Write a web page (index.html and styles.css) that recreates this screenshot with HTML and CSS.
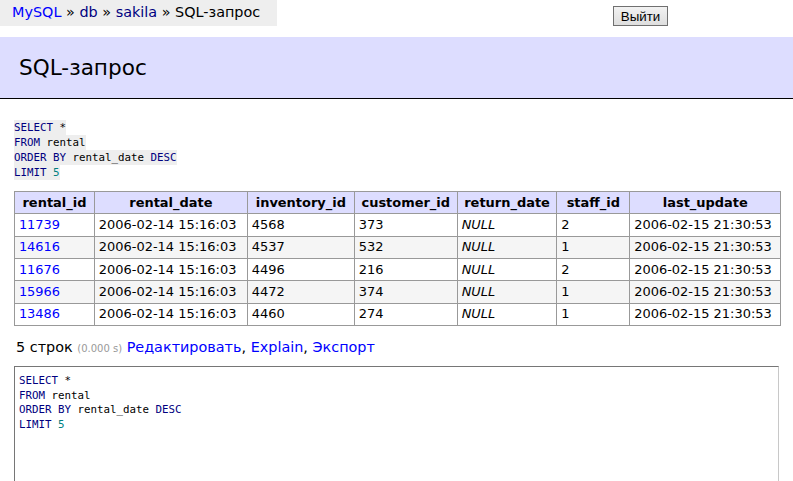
FILE: index.html
```html
<!DOCTYPE html>
<html lang="ru">
<head>
<meta charset="utf-8">
<title>SQL-запрос</title>
<link rel="stylesheet" href="styles.css">
</head>
<body>
<div class="topbar">
  <p class="breadcrumb"><a href="#" class="link-new">MySQL</a> » <a href="#">db</a> » <a href="#">sakila</a> » SQL-запрос</p>
  <button class="logout" type="button">Выйти</button>
</div>
<h2 class="title">SQL-запрос</h2>
<div class="content">
  <p class="query sql"><code class="code-bg"><a href="#" class="kw">SELECT</a> *<br><a href="#" class="kw">FROM</a> rental<br><a href="#" class="kw">ORDER BY</a> rental_date <a href="#" class="kw">DESC</a><br><a href="#" class="kw">LIMIT</a> <span class="num">5</span></code></p>
  <table class="result">
    <thead>
      <tr><th class="c1">rental_id</th><th class="c2">rental_date</th><th class="c3">inventory_id</th><th class="c4">customer_id</th><th class="c5">return_date</th><th class="c6">staff_id</th><th class="c7">last_update</th></tr>
    </thead>
    <tbody>
      <tr><td><a href="#" class="link-new">11739</a></td><td>2006-02-14 15:16:03</td><td>4568</td><td>373</td><td><i>NULL</i></td><td>2</td><td>2006-02-15 21:30:53</td></tr>
      <tr><td><a href="#" class="link-new">14616</a></td><td>2006-02-14 15:16:03</td><td>4537</td><td>532</td><td><i>NULL</i></td><td>1</td><td>2006-02-15 21:30:53</td></tr>
      <tr><td><a href="#" class="link-new">11676</a></td><td>2006-02-14 15:16:03</td><td>4496</td><td>216</td><td><i>NULL</i></td><td>2</td><td>2006-02-15 21:30:53</td></tr>
      <tr><td><a href="#" class="link-new">15966</a></td><td>2006-02-14 15:16:03</td><td>4472</td><td>374</td><td><i>NULL</i></td><td>1</td><td>2006-02-15 21:30:53</td></tr>
      <tr><td><a href="#" class="link-new">13486</a></td><td>2006-02-14 15:16:03</td><td>4460</td><td>274</td><td><i>NULL</i></td><td>1</td><td>2006-02-15 21:30:53</td></tr>
    </tbody>
  </table>
  <p class="summary">5 строк <span class="time">(0.000 s)</span> <a href="#" class="link-new">Редактировать</a>, <a href="#" class="link-new">Explain</a>, <a href="#" class="link-new">Экспорт</a></p>
  <div class="editor sql"><span class="kw">SELECT</span> *<br><span class="kw">FROM</span> rental<br><span class="kw">ORDER BY</span> rental_date <span class="kw">DESC</span><br><span class="kw">LIMIT</span> <span class="num">5</span></div>
</div>
</body>
</html>
```

FILE: styles.css
```css
html, body {
  margin: 0;
  padding: 0;
  background: #fff;
  color: #000;
}
body {
  font-family: "DejaVu Sans", Verdana, sans-serif;
  font-size: 14.4px;
  line-height: 1.25;
  overflow: hidden;
}
a {
  color: navy;
  text-decoration: none;
}
a.link-new {
  color: blue;
}
.topbar {
  display: flex;
  align-items: flex-start;
  height: 37px;
}
.breadcrumb {
  margin: 0;
  width: 265px;
  height: 26px;
  line-height: 24px;
  padding: 0 0 0 12px;
  background: #eee;
  white-space: nowrap;
}
.logout {
  margin: 6px 0 0 336px;
  width: 55px;
  height: 20px;
  padding: 0;
  font-family: "Liberation Sans", Arial, sans-serif;
  font-size: 13.3px;
  color: #000;
  background: linear-gradient(#f2f2f2, #dedede);
  border: 1px solid #707070;
  border-radius: 0;
}
.title {
  margin: 0;
  padding: 17px 19px;
  line-height: 27px;
  font-size: 21.6px;
  font-weight: normal;
  background: #ddf;
  border-bottom: 1px solid #000;
}
.content {
  padding: 0 0 0 14px;
}
.sql {
  font-family: "DejaVu Sans Mono", monospace;
  font-size: 10.8px;
  line-height: 15px;
}
.sql code {
  font-family: inherit;
  font-size: inherit;
}
.sql .kw {
  color: navy;
}
.sql .num {
  color: #007f7f;
}
.query {
  margin: 21px 0 0;
}
.code-bg {
  background: #eee;
  padding: 1px 0;
}
.result {
  margin: 11px 0 0;
  border-collapse: collapse;
  font-size: 12.96px;
  line-height: 1.25;
}
.result td, .result th {
  border: 1px solid #999;
  padding: 0.2em 0.3em;
  white-space: nowrap;
}
.result th {
  background: #ddf;
  text-align: center;
  padding: 0.2em 0.5em;
}
.result tbody tr:nth-child(2n) {
  background: #f5f5f5;
}
.result .c1 { width: 66px; }
.result .c2 { width: 139px; }
.result .c3 { width: 93px; }
.result .c4 { width: 89px; }
.result .c5 { width: 85px; }
.result .c6 { width: 59px; }
.result .c7 { width: 137px; }
.summary {
  margin: 12px 0 0 2px;
}
.time {
  color: #999;
  font-size: 10px;
}
.editor {
  margin-top: 10px;
  width: 759px;
  height: 130px;
  padding: 7px 0 0 4px;
  line-height: 14.5px;
  border-top: 1px solid #767676;
  border-left: 1px solid #767676;
  border-right: 1px solid #c8c8c8;
  border-bottom: 1px solid #c8c8c8;
}
```
